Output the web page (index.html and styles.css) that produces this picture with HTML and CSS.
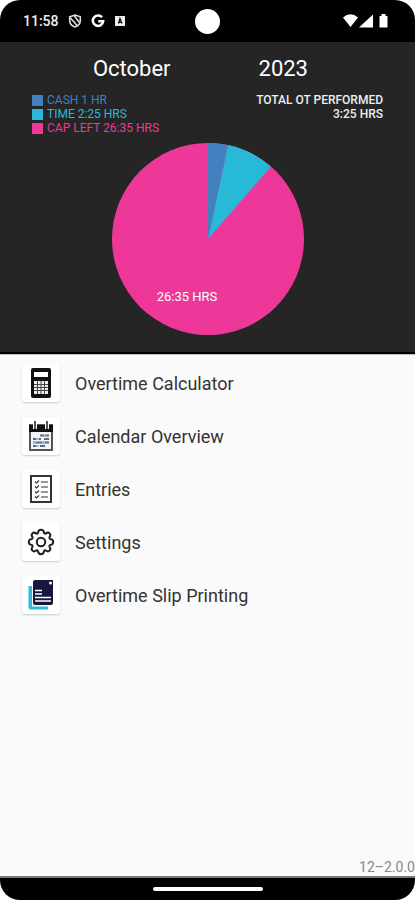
FILE: index.html
```html
<!doctype html>
<html lang="en">
<head>
<meta charset="utf-8">
<meta name="viewport" content="width=device-width, initial-scale=1">
<title>Overtime</title>
<link rel="stylesheet" href="styles.css">
</head>
<body>
<div class="phone">
	<div class="statusbar">
		<div class="status-left">
			<span class="clock">11:58</span>
			<svg width="14" height="14" viewBox="0 0 14 14" fill="none" stroke="#ddd" stroke-width="1.6">
				<path d="M7 1L12.300 2.800V6.500C12.300 9.500 10 12 7 13C4 12 1.700 9.500 1.700 6.500V2.800Z"/>
				<path d="M2 3.500L9.500 12M6 1.500L11.500 8.500"/>
			</svg>
			<svg width="14" height="14" viewBox="0 0 14 14" fill="none" stroke="#fff" stroke-width="2.500">
				<path d="M11 3.300A5.200 5.200 0 1 0 12.200 7.200H7.200"/>
			</svg>
			<svg width="12" height="12" viewBox="0 0 12 12">
				<path fill="#eee" d="M1 1H11V11H1Z"/>
				<path fill="none" stroke="#111" stroke-width="1.300" d="M4.500 8.500L6 3.500L8 8.500M4.500 7.300H8"/>
			</svg>
		</div>
		<span class="camera"></span>
		<div class="status-right">
			<svg width="49" height="16" viewBox="0 0 49 16" fill="#fff">
				<path d="M0 4.500Q7.500-2 15 4.500L7.500 14Z"/>
				<path d="M16 14.500L30 1.500V14.500Z"/>
				<path d="M36.500 3H38.500V1H42.500V3H44.500V14.500H36.500Z"/>
			</svg>
		</div>
	</div>

	<header class="summary">
		<div class="period">
			<button type="button">October</button>
			<button type="button">2023</button>
		</div>
		<div class="totals">
			<ul class="legend">
				<li class="cash">CASH 1 HR</li>
				<li class="time">TIME 2:25 HRS</li>
				<li class="cap">CAP LEFT 26:35 HRS</li>
			</ul>
			<p class="performed">TOTAL OT PERFORMED<br>3:25 HRS</p>
		</div>
		<svg class="pie" viewBox="0 0 192 192" role="img" aria-label="Overtime split">
			<circle class="pie-cap" cx="96" cy="96" r="96"/>
			<!-- 30 hours all round, 12 degrees each -->
			<path class="pie-time" d="M96 96L115.960 2.100A96 96 0 0 1 158.980 23.550Z"/>
			<path class="pie-cash" d="M96 96V0A96 96 0 0 1 115.960 2.100Z"/>
			<text x="75" y="158">26:35 HRS</text>
		</svg>
	</header>

	<nav class="menu">
		<a href="#calculator">
			<span class="tile">
				<svg width="28" height="32" viewBox="0 0 28 32">
					<rect x="4" y="1" width="20" height="30" rx="2" fill="#111"/>
					<rect x="7" y="5" width="14" height="5" fill="#fff"/>
					<rect x="7" y="14" width="14" height="13" fill="#eee"/>
					<path stroke="#444" d="M10.500 14V27M14 14V27M17.500 14V27M7 17.500H21M7 20.500H21M7 23.500H21"/>
				</svg>
			</span>
			Overtime Calculator
		</a>
		<a href="#calendar">
			<span class="tile">
				<svg width="28" height="32" viewBox="0 0 28 32">
					<rect x="3" y="5" width="22" height="25" fill="#f4f4f4" stroke="#555" stroke-width="2"/>
					<path fill="#111" d="M2 5H26V12H2Z"/>
					<path stroke="#fff" stroke-width="4" d="M8 1V9M20 1V9"/>
					<path stroke="#555" stroke-width="2" d="M8 1V9M20 1V9"/>
					<path stroke="#667" stroke-width="2" d="M13 15.500H22M6 19H14M17 19H22M6 22.500H22M6 26H10M13 26H18"/>
					<path stroke="#8bc6f4" stroke-width="2" d="M17 15.500H19M9 19H12M6 22.500H9M15 22.500H18M9 26H12"/>
				</svg>
			</span>
			Calendar Overview
		</a>
		<a href="#entries">
			<span class="tile">
				<svg width="28" height="32" viewBox="0 0 28 32" fill="none" stroke="#333">
					<rect x="4" y="3" width="20" height="26" fill="#fff" stroke-width="2"/>
					<path stroke-width="1.200" d="M8 8.500L9.500 10L12 7.500M8 13.500L9.500 15L12 12.500M8 18.500L9.500 20L12 17.500M8 23.500L9.500 25L12 22.500"/>
					<path stroke="#777" stroke-width="1.500" d="M14 9H21M14 14H21M14 19H21M14 24H21"/>
				</svg>
			</span>
			Entries
		</a>
		<a href="#settings">
			<span class="tile">
				<svg width="28" height="28" viewBox="0 0 28 28" fill="none" stroke="#222" stroke-width="2" stroke-linejoin="round">
					<path d="M11 4.800Q11.300 1.800 14 1.800T17 4.800Q17.500 6 18.800 5.500Q21 3.800 22.600 5.400T22.500 9.200Q22 10.500 23.200 11Q26.200 11.300 26.200 14T23.200 17Q22 17.500 22.500 18.800Q24.200 21 22.600 22.600T18.800 22.500Q17.500 22 17 23.200Q16.700 26.200 14 26.200T11 23.200Q10.500 22 9.200 22.500Q7 24.200 5.400 22.600T5.500 18.800Q6 17.500 4.800 17Q1.800 16.700 1.800 14T4.800 11Q6 10.500 5.500 9.200Q3.800 7 5.400 5.400T9.200 5.500Q10.500 6 11 4.800Z"/>
					<circle cx="14" cy="14" r="4.200"/>
				</svg>
			</span>
			Settings
		</a>
		<a href="#printing">
			<span class="tile">
				<svg width="28" height="32" viewBox="0 0 28 32">
					<path fill="#35b8d4" d="M4 7H1.500V28Q1.500 30.500 4 30.500H21V27.500H5V7Z"/>
					<path fill="#16163f" d="M8 1H26V24Q26 26 24 26H8Q6 26 6 24V3Q6 1 8 1Z"/>
					<circle cx="23.500" cy="4" r="1.500" fill="#fff"/>
					<path stroke="#fff" stroke-width="1.600" d="M8 11.500H15M8 15H15M8 18.500H24M8 22H24"/>
				</svg>
			</span>
			Overtime Slip Printing
		</a>
	</nav>

	<footer class="version">12–2.0.0</footer>
	<div class="navbar"><span></span></div>
</div>
</body>
</html>
```
FILE: styles.css
```css
* { box-sizing: border-box; }
body {
	margin: 0;
	background: #fff;
	font-family: Roboto, sans-serif;
}
.phone {
	display: flex;
	flex-direction: column;
	min-height: 100vh;
	border-radius: 20px;
	overflow: hidden;
	background: #fafafa;
}

/* status bar */
.statusbar {
	display: grid;
	grid-template-columns: 1fr auto 1fr;
	align-items: center;
	height: 42px;
	padding: 0 23px;
	background: #000;
	color: #eee;
}
.status-left {
	display: flex;
	align-items: center;
	gap: 9px;
}
.clock {
	font-size: 14px;
	font-weight: 500;
}
.camera {
	width: 25px;
	height: 25px;
	border-radius: 50%;
	background: #fff;
}
.status-right {
	display: flex;
	justify-content: flex-end;
}

/* month summary */
.summary {
	padding: 13px 32px 17px;
	border-bottom: 2px solid #000;
	background: #252525;
	color: #eee;
}
.period {
	display: grid;
	grid-template-columns: 1fr 1fr;
	padding: 0 24px;
}
.period button {
	padding: 0;
	border: 0;
	background: none;
	color: #fff;
	font: 22px/28px Roboto, sans-serif;
}
.totals {
	display: flex;
	justify-content: space-between;
	margin-top: 10px;
	font-size: 12px;
	line-height: 14px;
}
.legend {
	margin: 0;
	padding: 0;
	list-style: none;
}
.legend li {
	display: flex;
	align-items: center;
	gap: 4px;
}
.legend li::before {
	content: "";
	width: 11px;
	height: 11px;
	background: currentColor;
}
.cash { color: #4380c0; }
.time { color: #29b9d8; }
.cap { color: #ed3899; }
.performed {
	margin: 0;
	font-weight: 500;
	text-align: right;
}
.pie {
	display: block;
	width: 192px;
	margin: 8px auto 0;
}
.pie-cash { fill: #4380c0; }
.pie-time { fill: #29b9d8; }
.pie-cap { fill: #ed3899; }
.pie text {
	fill: #fff;
	font-size: 13px;
	text-anchor: middle;
}

/* menu */
.menu {
	display: flex;
	flex-direction: column;
	flex: 1;
	gap: 15px;
	padding: 9px 22px;
	border-top: 1px solid #bbb;
}
.menu a {
	display: flex;
	align-items: center;
	gap: 15px;
	color: #333;
	font-size: 18px;
	text-decoration: none;
}
.tile {
	display: flex;
	align-items: center;
	justify-content: center;
	width: 38px;
	height: 38px;
	border-radius: 3px;
	background: #fff;
	box-shadow: 0 1px 2px #ccc;
}

.version {
	color: #888;
	font-size: 14px;
	line-height: 18px;
	text-align: right;
}
.navbar {
	display: flex;
	align-items: center;
	justify-content: center;
	height: 24px;
	border-top: 2px solid #777;
	background: #000;
}
.navbar span {
	width: 110px;
	height: 4px;
	border-radius: 2px;
	background: #fff;
}
```
